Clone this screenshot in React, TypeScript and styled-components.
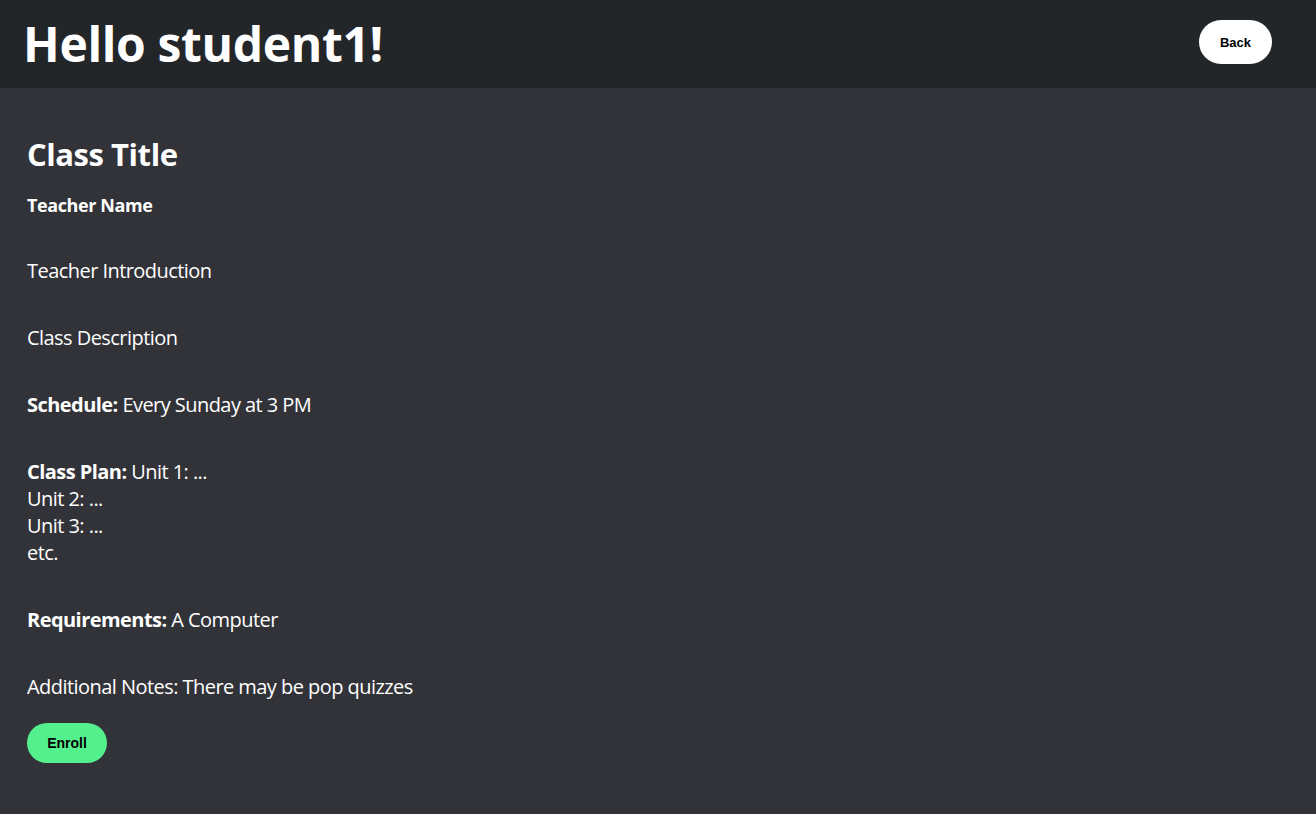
import React from "react";
import styled, { createGlobalStyle } from "styled-components";

const Global = createGlobalStyle`
  html, body { margin: 0; padding: 0; background: #323339; }
  body { font-family: "Open Sans", "Noto Sans", sans-serif; color: #ffffff; }
  * { box-sizing: border-box; }
`;

const Page = styled.div`
  min-height: 814px;
  background: #323339;
`;

const Header = styled.header`
  height: 88px;
  background: #232629;
  display: flex;
  align-items: center;
  justify-content: space-between;
  padding: 0 44px 0 23px;
`;

const Greeting = styled.h1`
  margin: 0;
  font-size: 48px;
  font-weight: 700;
  line-height: 60px;
  letter-spacing: -0.35px;
  color: #fff;
`;

const PillButton = styled.button<{ $bg: string; $w: number; $h: number; $fs: number }>`
  width: ${(p) => p.$w}px;
  height: ${(p) => p.$h}px;
  border: none;
  border-radius: ${(p) => p.$h / 2}px;
  background: ${(p) => p.$bg};
  color: #000;
  font-family: "Liberation Sans", Arial, sans-serif;
  font-weight: 700;
  font-size: ${(p) => p.$fs}px;
  padding: 0;
  cursor: pointer;
`;

const BackSlot = styled.div`
  margin-bottom: 4px;
`;

const Main = styled.main`
  padding: 46px 27px 0;
  display: flex;
  flex-direction: column;
  align-items: flex-start;
`;

const ClassTitle = styled.h2`
  margin: 0;
  font-size: 31px;
  line-height: 40px;
  font-weight: 700;
  letter-spacing: -0.45px;
`;

const TeacherName = styled.h3`
  margin: 19px 0 0;
  font-size: 18px;
  line-height: 24px;
  font-weight: 700;
  letter-spacing: -0.4px;
`;

const Details = styled.div`
  margin-top: 40px;
  display: flex;
  flex-direction: column;
  gap: 40px;
`;

const Para = styled.p`
  margin: 0;
  font-size: 20px;
  line-height: 27px;
  letter-spacing: -0.55px;
  white-space: pre-line;
`;

const Label = styled.strong`
  font-weight: 700;
`;

const EnrollWrap = styled.div`
  margin-top: 23px;
`;

export default function App() {
  return (
    <Page>
      <Global />
      <Header>
        <Greeting>Hello student1!</Greeting>
        <BackSlot>
          <PillButton $bg="#ffffff" $w={73} $h={44} $fs={13}>Back</PillButton>
        </BackSlot>
      </Header>
      <Main>
        <ClassTitle>Class Title</ClassTitle>
        <TeacherName>Teacher Name</TeacherName>
        <Details>
          <Para>Teacher Introduction</Para>
          <Para>Class Description</Para>
          <Para><Label>Schedule:</Label> Every Sunday at 3 PM</Para>
          <Para><Label>Class Plan:</Label> {"Unit 1: ...\nUnit 2: ...\nUnit 3: ...\netc."}</Para>
          <Para><Label>Requirements:</Label> A Computer</Para>
          <Para>Additional Notes: There may be pop quizzes</Para>
        </Details>
        <EnrollWrap>
          <PillButton $bg="#55f08e" $w={80} $h={40} $fs={14}>Enroll</PillButton>
        </EnrollWrap>
      </Main>
    </Page>
  );
}
